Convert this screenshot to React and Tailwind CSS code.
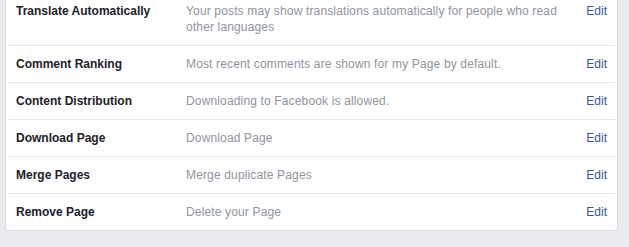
export default function App() {
  const rows = [
    ["Translate Automatically", "Your posts may show translations automatically for people who read other languages"],
    ["Comment Ranking", "Most recent comments are shown for my Page by default."],
    ["Content Distribution", "Downloading to Facebook is allowed."],
    ["Download Page", "Download Page"],
    ["Merge Pages", "Merge duplicate Pages"],
    ["Remove Page", "Delete your Page"],
  ];
  return (
    <div className="w-[629px] h-[247px] bg-[#e9ebee] overflow-hidden" style={{ fontFamily: '"Liberation Sans", Arial, sans-serif' }}>
      <div className="ml-[5px] w-[613px] bg-white border-x border-b border-[#dddfe2] rounded-b-[3px] px-[2px]">
        {rows.map(([label, desc], i) => (
          <div
            key={label}
            className={`flex items-start text-[12px] leading-[16px] pl-[8px] pr-[8px] ${i === 0 ? "pt-[3px] pb-[10px]" : "pt-[10px] pb-[10px] border-t border-[#e5e5e5]"}`}
          >
            <div className="w-[170px] shrink-0 font-bold text-[#1d2129]">{label}</div>
            <div className="w-[385px] shrink-0 text-[#90949c] tracking-[0.15px]">{desc}</div>
            <div className="flex-1 text-right text-[#365899]">Edit</div>
          </div>
        ))}
      </div>
    </div>
  );
}
